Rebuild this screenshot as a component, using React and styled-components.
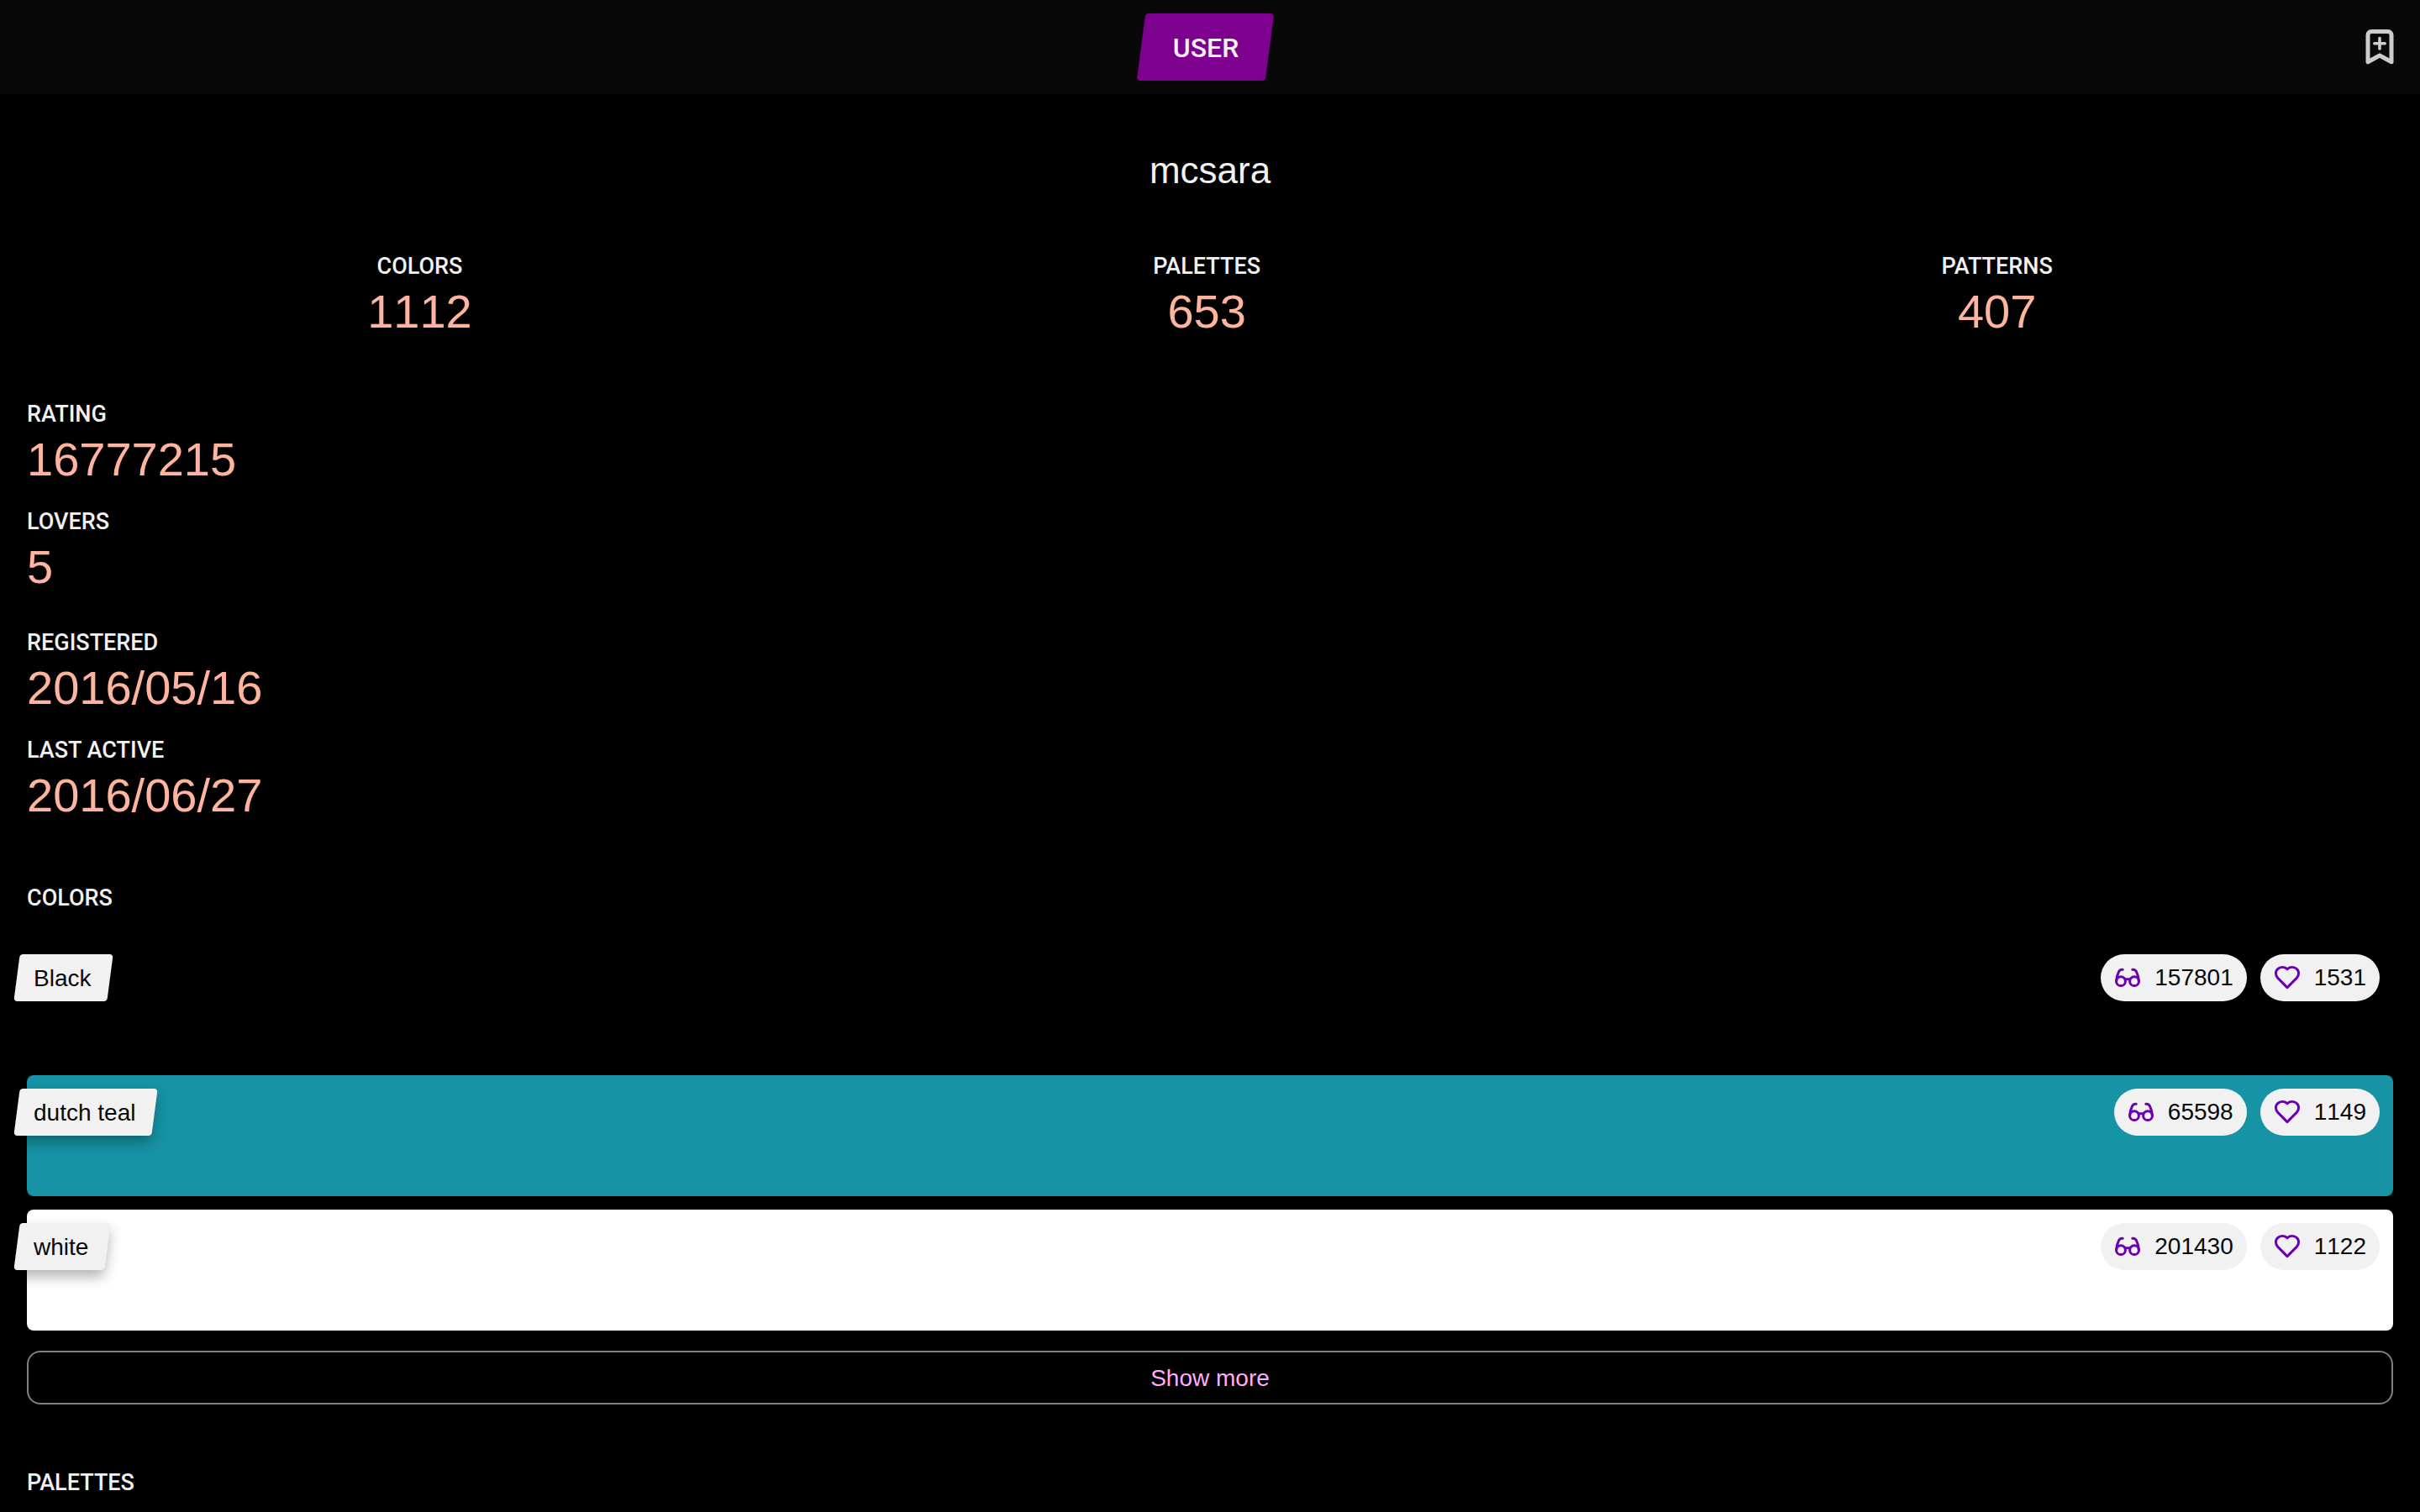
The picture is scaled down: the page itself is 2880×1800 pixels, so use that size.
import React from "react";
import styled, { createGlobalStyle } from "styled-components";

const sans = `"Liberation Sans", Arial, sans-serif`;
const caps = `Roboto, "Liberation Sans", sans-serif`;

const GlobalStyle = createGlobalStyle`
  *, *::before, *::after { box-sizing: border-box; }
  body {
    margin: 0;
    background: #000;
    color: #f1f1f1;
    font-family: ${sans};
    font-size: 28px;
  }
  h1, h2, dl, dt, dd, ul { margin: 0; padding: 0; font-weight: 400; }
  ul { list-style: none; }
`;

const Header = styled.header`
  display: grid;
  grid-template-columns: 1fr auto 1fr;
  align-items: center;
  padding: 16px 28px 16px 16px;
  background: #080808;
`;

const Slanted = styled.span`
  position: relative;
  isolation: isolate;
  display: inline-flex;
  align-items: center;

  &::before {
    content: "";
    position: absolute;
    inset: 0;
    z-index: -1;
    border-radius: 4px;
    transform: skewX(-7.5deg);
  }
`;

const PageBadge = styled(Slanted)`
  grid-column: 2;
  height: 80px;
  padding: 2px 36px 0 38px;
  color: #f1f1f1;
  font: 500 32px ${caps};

  &::before { background: #7e008f; }
`;

const IconButton = styled.button`
  display: flex;
  justify-self: end;
  padding: 0;
  border: 0;
  background: none;
  color: #ccc;
  cursor: pointer;
`;

const Main = styled.main`
  display: flex;
  flex-direction: column;
  gap: 68px;
  padding: 64px 32px 16px;
`;

const Title = styled.h1`
  padding-top: 2px;
  font-size: 44px;
  line-height: 50px;
  text-align: center;
`;

const Totals = styled.dl`
  display: flex;
  justify-content: space-around;
  text-align: center;
`;

const Facts = styled.div`
  display: flex;
  flex-direction: column;
  gap: 36px;
`;

const FactGroup = styled.dl`
  display: flex;
  flex-direction: column;
  gap: 20px;
`;

const Label = styled.dt`
  font: 500 27px/42px ${caps};
`;

const Value = styled.dd`
  color: #ffb4a0;
  font-size: 56px;
  font-kerning: none;
  line-height: 66px;
`;

const Section = styled.section`
  padding-bottom: 4px;
`;

const Heading = styled.h2`
  margin-bottom: 30px;
  font: 500 27px/42px ${caps};
`;

const Swatches = styled.ul`
  display: grid;
  gap: 16px;
`;

const Swatch = styled.li`
  display: flex;
  align-items: flex-start;
  justify-content: space-between;
  min-height: 144px;
  padding: 16px 16px 16px 0;
  border-radius: 8px;
  background: ${(p) => p.$color};
`;

const SwatchName = styled(Slanted)`
  height: 56px;
  margin-left: -12px;
  padding: 2px 23px 0 20px;
  color: #080808;

  &::before {
    background: #f1f1f1;
    box-shadow: 0 8px 16px rgba(0, 0, 0, 0.3);
  }
`;

const Pills = styled.div`
  display: flex;
  gap: 16px;
`;

const Pill = styled.span`
  display: flex;
  align-items: center;
  gap: 16px;
  height: 56px;
  padding: 0 16px;
  border-radius: 28px;
  background: #f1f1f1;
  color: #080808;
  font-kerning: none;
  line-height: 34px;

  svg { color: #6a00b0; }
`;

const MoreButton = styled.button`
  width: 100%;
  height: 64px;
  margin-top: 24px;
  padding: 2px 0 0;
  border: 2px solid #7f7f7f;
  border-radius: 16px;
  background: none;
  color: #ffacff;
  font: 28px ${sans};
  cursor: pointer;
`;

const BookmarkPlus = () => (
  <svg width="40" height="48" viewBox="0 0 40 48" fill="none" stroke="currentColor" strokeLinecap="round" strokeLinejoin="round" aria-hidden="true">
    <path strokeWidth="5" d="M6 41.8V9.5a4 4 0 0 1 4-4h20a4 4 0 0 1 4 4v32.3L20 34z" />
    <path strokeWidth="3.6" d="M20 13.6v12.4M13.8 19.8h12.4" />
  </svg>
);

const Glasses = () => (
  <svg width="32" height="32" viewBox="0 0 32 32" fill="none" stroke="currentColor" strokeWidth="3" strokeLinecap="round" aria-hidden="true">
    <circle cx="8" cy="20.2" r="5.4" />
    <circle cx="24" cy="20.2" r="5.4" />
    <path d="M13 17.8h6M2.6 20.2C2.6 16.4 4.2 11.4 5.7 8.4 6.6 6.8 8.2 6.1 10.2 6.3M29.4 20.2C29.4 16.4 27.8 11.4 26.3 8.4 25.4 6.8 23.8 6.1 21.8 6.3" />
  </svg>
);

const Heart = () => (
  <svg width="32" height="32" viewBox="0 0 32 32" fill="none" stroke="currentColor" strokeWidth="3" strokeLinejoin="round" aria-hidden="true">
    <path d="M16 27.6 4.8 16.4C1.4 12.8 1.7 7.4 5.4 4.9 8.8 2.7 13.2 3 16 5.8 18.8 3 23.2 2.7 26.6 4.9 30.3 7.4 30.6 12.8 27.2 16.4Z" />
  </svg>
);

const Stat = ({ label, value }) => (
  <div>
    <Label>{label}</Label>
    <Value>{value}</Value>
  </div>
);

const totals = [
  ["COLORS", "1112"],
  ["PALETTES", "653"],
  ["PATTERNS", "407"],
];

const factGroups = [
  [["RATING", "16777215"], ["LOVERS", "5"]],
  [["REGISTERED", "2016/05/16"], ["LAST ACTIVE", "2016/06/27"]],
];

const colors = [
  { name: "Black", color: "#000000", views: 157801, likes: 1531 },
  { name: "dutch teal", color: "#1693a5", views: 65598, likes: 1149 },
  { name: "white", color: "#ffffff", views: 201430, likes: 1122 },
];

export default function App() {
  return (
    <>
      <GlobalStyle />
      <Header>
        <PageBadge>USER</PageBadge>
        <IconButton type="button" aria-label="Add bookmark">
          <BookmarkPlus />
        </IconButton>
      </Header>
      <Main>
        <Title>mcsara</Title>
        <Totals>
          {totals.map(([label, value]) => (
            <Stat key={label} label={label} value={value} />
          ))}
        </Totals>
        <Facts>
          {factGroups.map((group) => (
            <FactGroup key={group[0][0]}>
              {group.map(([label, value]) => (
                <Stat key={label} label={label} value={value} />
              ))}
            </FactGroup>
          ))}
        </Facts>
        <Section>
          <Heading>COLORS</Heading>
          <Swatches>
            {colors.map((c) => (
              <Swatch key={c.name} $color={c.color}>
                <SwatchName>{c.name}</SwatchName>
                <Pills>
                  <Pill><Glasses />{c.views}</Pill>
                  <Pill><Heart />{c.likes}</Pill>
                </Pills>
              </Swatch>
            ))}
          </Swatches>
          <MoreButton type="button">Show more</MoreButton>
        </Section>
        <Section>
          <Heading>PALETTES</Heading>
        </Section>
      </Main>
    </>
  );
}
